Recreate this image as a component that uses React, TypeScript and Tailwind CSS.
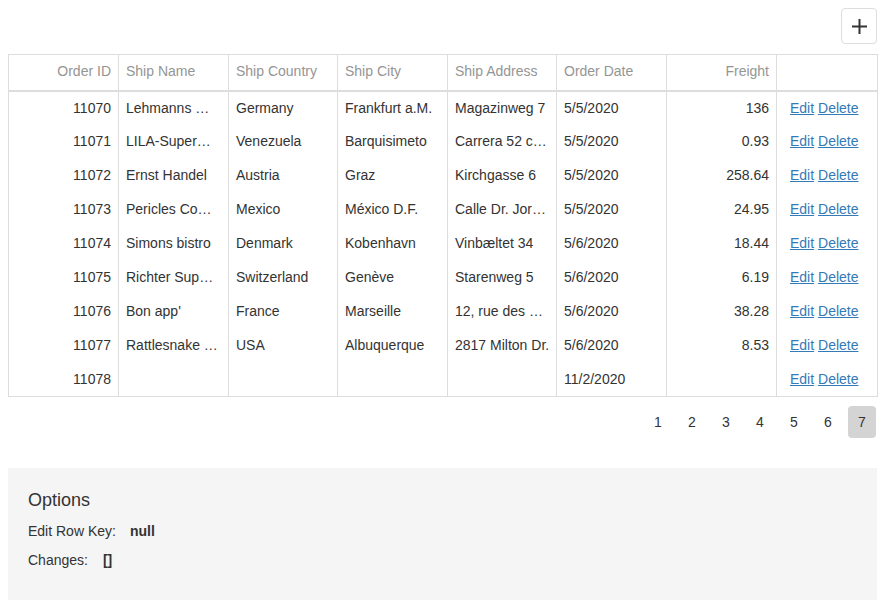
import * as React from 'react';

interface Order {
  id: number;
  name: string;
  country: string;
  city: string;
  address: string;
  date: string;
  freight: string;
}

// texts as the grid shows them, already cut to the column width
const orders: Order[] = [
  { id: 11070, name: 'Lehmanns …', country: 'Germany', city: 'Frankfurt a.M.', address: 'Magazinweg 7', date: '5/5/2020', freight: '136' },
  { id: 11071, name: 'LILA-Super…', country: 'Venezuela', city: 'Barquisimeto', address: 'Carrera 52 c…', date: '5/5/2020', freight: '0.93' },
  { id: 11072, name: 'Ernst Handel', country: 'Austria', city: 'Graz', address: 'Kirchgasse 6', date: '5/5/2020', freight: '258.64' },
  { id: 11073, name: 'Pericles Co…', country: 'Mexico', city: 'México D.F.', address: 'Calle Dr. Jor…', date: '5/5/2020', freight: '24.95' },
  { id: 11074, name: 'Simons bistro', country: 'Denmark', city: 'Kobenhavn', address: 'Vinbæltet 34', date: '5/6/2020', freight: '18.44' },
  { id: 11075, name: 'Richter Sup…', country: 'Switzerland', city: 'Genève', address: 'Starenweg 5', date: '5/6/2020', freight: '6.19' },
  { id: 11076, name: "Bon app'", country: 'France', city: 'Marseille', address: '12, rue des …', date: '5/6/2020', freight: '38.28' },
  { id: 11077, name: 'Rattlesnake …', country: 'USA', city: 'Albuquerque', address: '2817 Milton Dr.', date: '5/6/2020', freight: '8.53' },
  { id: 11078, name: '', country: '', city: '', address: '', date: '11/2/2020', freight: '' },
];

const columns = ['Order ID', 'Ship Name', 'Ship Country', 'Ship City', 'Ship Address', 'Order Date', 'Freight', ''];
const widths = ['w-[110px]', 'w-[110px]', 'w-[109px]', 'w-[110px]', 'w-[109px]', 'w-[110px]', 'w-[110px]', 'w-[101px]'];

const cell = 'px-[7px] h-[34px] whitespace-nowrap overflow-hidden border-r border-[#ddd] last:border-r-0';

export default function App() {
  return (
    <div className="p-2 font-['Liberation_Sans',Arial,sans-serif] text-[14px] text-[#333] bg-white min-h-[600px]">
      {/* toolbar */}
      <div className="flex justify-end pb-[10px]">
        <button className="w-9 h-9 border border-[#ddd] rounded bg-white flex items-center justify-center">
          <svg width="15" height="15" viewBox="0 0 15 15" fill="none" stroke="#333" strokeWidth="2">
            <path d="M7.5 0v15M0 7.5h15" />
          </svg>
        </button>
      </div>

      <table className="table-fixed w-full border border-[#ddd] border-collapse">
        <colgroup>
          {widths.map((w, i) => (
            <col key={i} className={w} />
          ))}
        </colgroup>
        <thead>
          <tr className="border-b-2 border-[#ddd]">
            {columns.map((c, i) => (
              <th
                key={i}
                className={`${cell} !h-[36px] pb-[2px] font-normal text-[#959595] ${i === 0 || i === 6 ? 'text-right' : 'text-left'}`}
              >
                {c}
              </th>
            ))}
          </tr>
        </thead>
        <tbody>
          {orders.map((o) => (
            <tr key={o.id}>
              <td className={`${cell} text-right`}>{o.id}</td>
              <td className={cell}>{o.name}</td>
              <td className={cell}>{o.country}</td>
              <td className={cell}>{o.city}</td>
              <td className={cell}>{o.address}</td>
              <td className={cell}>{o.date}</td>
              <td className={`${cell} text-right`}>{o.freight}</td>
              <td className={`${cell} text-left pl-[13px]`}>
                <a href="#" className="text-[#337ab7] underline">Edit</a>{' '}
                <a href="#" className="text-[#337ab7] underline">Delete</a>
              </td>
            </tr>
          ))}
        </tbody>
      </table>

      {/* pager */}
      <div className="flex justify-end gap-[6px] pt-[9px] pr-px">
        {[1, 2, 3, 4, 5, 6, 7].map((p) => (
          <div
            key={p}
            className={`w-[28px] h-[32px] flex items-center justify-center rounded ${p === 7 ? 'bg-[#d4d4d4]' : ''}`}
          >
            {p}
          </div>
        ))}
      </div>

      {/* options */}
      <div className="mt-[30px] bg-[#f5f5f5] px-5 pt-5 pb-[30px] mb-[-8px]">
        <div className="text-[18px] leading-6">Options</div>
        <div className="mt-[9px] leading-5">
          <span>Edit Row Key:</span>
          <span className="ml-[14px] font-bold">null</span>
        </div>
        <div className="mt-[9px] leading-5">
          <span>Changes:</span>
          <span className="ml-[15px] font-bold">[]</span>
        </div>
      </div>
    </div>
  );
}
